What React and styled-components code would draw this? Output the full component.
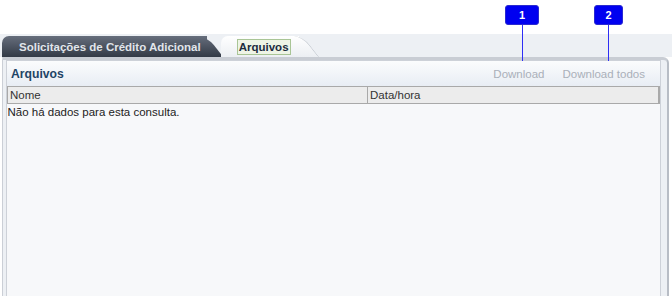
import React from "react";
import styled, { createGlobalStyle } from "styled-components";

const Global = createGlobalStyle`
  html, body { margin: 0; padding: 0; background: #fff; overflow: hidden; }
  body { font-family: "Liberation Sans", Arial, sans-serif; }
`;

const Page = styled.div`
  position: relative;
  width: 672px;
  height: 296px;
  overflow: hidden;
`;

const TopSpace = styled.div`
  height: 34px;
`;

const TabStrip = styled.div`
  height: 23px;
  background: #edf0f4;
  display: flex;
  align-items: flex-end;
  padding-left: 2px;
`;

const Tab = styled.div`
  position: relative;
  z-index: ${(p) => (p.$active ? 2 : 1)};
  height: 21px;
  display: flex;
  align-items: center;
  font-size: 11.5px;
  font-weight: bold;
  white-space: nowrap;
  border-top-left-radius: 7px;
  margin-left: ${(p) => (p.$active ? "14px" : "0")};
  padding: ${(p) => (p.$active ? "0 9px 0 17px" : "0 6px 0 17px")};
  color: ${(p) => (p.$active ? "#1b2c3e" : "#e1e5eb")};
  background: ${(p) =>
    p.$active
      ? "linear-gradient(#ffffff, #eceff3)"
      : "linear-gradient(#666e7c, #333a46)"};
  &::after {
    content: "";
    position: absolute;
    top: 0;
    bottom: 0;
    right: ${(p) => (p.$active ? "-12px" : "-8px")};
    width: 20px;
    z-index: -1;
    background: inherit;
    transform: skewX(38deg);
    border-top-right-radius: 9px;
    border-right: ${(p) => (p.$active ? "1px solid #c3c8cf" : "none")};
  }
`;

const FocusBox = styled.span`
  padding: 0 1px;
  line-height: 14px;
  background: #eef4e6;
  outline: 1px solid #a9c596;
`;

const Frame = styled.div`
  box-sizing: border-box;
  margin-left: 2px;
  width: 667px;
  height: 239px;
  background: #edf0f4;
  border-left: 1px solid #cbcfd6;
  border-right: 2px solid #b8bdc5;
  border-top: 3px solid #c9cdd4;
  border-top-right-radius: 6px;
  padding: 0 6px 0 3px;
`;

const Panel = styled.div`
  box-sizing: border-box;
  height: 100%;
  background: #f7f8fa;
  border: 1px solid #cdd1d8;
  border-bottom: none;
  display: flex;
  flex-direction: column;
`;

const TitleBar = styled.div`
  height: 25px;
  display: flex;
  align-items: center;
  padding: 0 15px 0 4px;
  background: linear-gradient(#fbfcfd, #e8edf4);
`;

const Title = styled.div`
  font-size: 12.2px;
  font-weight: bold;
  color: #1f4566;
`;

const Actions = styled.div`
  margin-left: auto;
  display: flex;
  gap: 18px;
`;

const ActionButton = styled.span`
  font-size: 11.5px;
  color: #aab0b9;
  cursor: default;
`;

const Table = styled.table`
  width: 100%;
  border-collapse: collapse;
  table-layout: fixed;
  font-size: 11.5px;
`;

const HeadCell = styled.th`
  height: 16px;
  padding: 0 2px;
  text-align: left;
  font-weight: normal;
  color: #333;
  background: #ececec;
  border: 1px solid #a9a9a9;
  border-left-color: ${(p) => (p.$first ? "#a9a9a9" : "#b5b5b5")};
  border-right-width: ${(p) => (p.$last ? "2px" : "1px")};
  width: ${(p) => p.$w || "auto"};
`;

const EmptyCell = styled.td`
  padding: 1px 0 0 0;
  color: #222;
  height: 14px;
`;

const Badge = styled.div`
  position: absolute;
  top: 5px;
  left: ${(p) => p.$x}px;
  width: ${(p) => p.$w}px;
  height: 20px;
  box-sizing: border-box;
  background: #0000f0;
  border: 1px solid #2a2ad0;
  border-radius: 3px;
  color: #fff;
  font-size: 11px;
  font-weight: bold;
  display: flex;
  align-items: center;
  justify-content: center;
  z-index: 5;
`;

const Leader = styled.div`
  position: absolute;
  top: 25px;
  left: ${(p) => p.$x}px;
  width: 1px;
  height: 36px;
  background: #2e2ef5;
  z-index: 5;
`;

export default function App() {
  return (
    <Page>
      <Global />
      <TopSpace />
      <TabStrip>
        <Tab>Solicitações de Crédito Adicional</Tab>
        <Tab $active>
          <FocusBox>Arquivos</FocusBox>
        </Tab>
      </TabStrip>
      <Frame>
        <Panel>
          <TitleBar>
            <Title>Arquivos</Title>
            <Actions>
              <ActionButton>Download</ActionButton>
              <ActionButton>Download todos</ActionButton>
            </Actions>
          </TitleBar>
          <Table>
            <thead>
              <tr>
                <HeadCell $first $w="355px">Nome</HeadCell>
                <HeadCell $last>Data/hora</HeadCell>
              </tr>
            </thead>
            <tbody>
              <tr>
                <EmptyCell colSpan={2}>Não há dados para esta consulta.</EmptyCell>
              </tr>
            </tbody>
          </Table>
        </Panel>
      </Frame>
      <Badge $x={505} $w={34}>1</Badge>
      <Leader $x={522} />
      <Badge $x={594} $w={29}>2</Badge>
      <Leader $x={608} />
    </Page>
  );
}
